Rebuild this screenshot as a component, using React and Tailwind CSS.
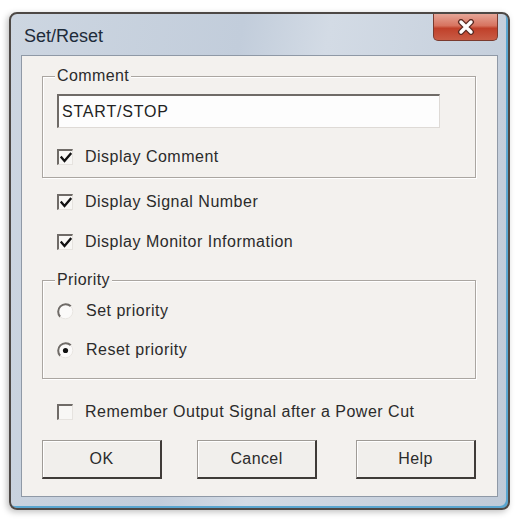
import React from "react";

const font = { fontFamily: '"Liberation Sans", Arial, sans-serif' };

function CheckBox({ checked }) {
  return (
    <span className="flex h-[16px] w-[16px] shrink-0 items-center justify-center border-t-2 border-l-2 border-b border-r border-t-[#6f6b67] border-l-[#6f6b67] border-b-[#e6e3df] border-r-[#e6e3df] bg-[#f8f7f5]">
      {checked ? (
        <svg width="12" height="12" viewBox="0 0 12 12">
          <path d="M1.5 5.5 L4.5 9 L10.5 2" fill="none" stroke="#111" strokeWidth="2.4" strokeLinecap="square" />
        </svg>
      ) : null}
    </span>
  );
}

function Radio({ checked }) {
  return (
    <svg width="17" height="17" viewBox="0 0 17 17" className="shrink-0">
      <circle cx="8.5" cy="8.5" r="7.5" fill="#fbfaf9" />
      <path d="M3.2 13.8 A7.5 7.5 0 0 1 13.8 3.2" fill="none" stroke="#6f6b67" strokeWidth="2" />
      <path d="M13.8 3.2 A7.5 7.5 0 0 1 3.2 13.8" fill="none" stroke="#e8e5e1" strokeWidth="1" />
      {checked ? <circle cx="8.5" cy="8.5" r="2.6" fill="#111" /> : null}
    </svg>
  );
}

function Row({ children, label, className = "" }) {
  return (
    <div className={`flex h-[24px] items-center ${className}`}>
      {children}
      <span className="ml-[12px] text-[16px] leading-none tracking-[0.5px] text-[#2b2b2b]">{label}</span>
    </div>
  );
}

function Group({ label, className = "", children }) {
  return (
    <div className={`relative border border-[#aaa6a1] shadow-[inset_1px_1px_0_#fff,1px_1px_0_#fff] ${className}`}>
      <span className="absolute -top-[10px] left-[12px] bg-[#f3f1ee] px-[2px] text-[16px] leading-[18px] tracking-[0.4px] text-[#2b2b2b]">
        {label}
      </span>
      {children}
    </div>
  );
}

function Button({ children, className = "" }) {
  return (
    <div
      className={`flex h-[39px] w-[120px] items-center justify-center border-t border-l border-b-2 border-r-2 border-t-[#9f9b96] border-l-[#9f9b96] border-b-[#3f3b38] border-r-[#3f3b38] bg-[#f1efec] text-[16px] tracking-[0.4px] text-[#2b2b2b] shadow-[inset_1px_1px_0_#fff] ${className}`}
    >
      {children}
    </div>
  );
}

export default function App() {
  return (
    <div className="h-[519px] w-[519px] bg-white pl-[9px] pt-[12px]" style={font}>
      <div className="flex h-[498px] w-[501px] flex-col overflow-hidden rounded-[8px] border-2 border-[#4d4845] bg-[linear-gradient(100deg,#cdd6e1_0%,#c2cddb_40%,#d3dbe5_55%,#bfcad8_100%)] shadow-[-2px_2px_6px_rgba(0,0,0,0.25),inset_-2px_-2px_0_#5aa6d0]">
        <div className="flex h-[41px] shrink-0 items-start justify-between">
          <span className="pl-[13px] pt-[13px] text-[18px] leading-[18px] text-[#1e2b3a]">Set/Reset</span>
          <div className="mr-[10px] flex h-[27px] w-[65px] items-center justify-center rounded-b-[5px] border border-t-0 border-[#7a3a2e] bg-[linear-gradient(#e5a597_0%,#d7735f_45%,#c0402a_55%,#c95c45_100%)]">
            <svg width="20" height="16" viewBox="0 0 20 16">
              <path d="M5 3 L15 13 M15 3 L5 13" stroke="#5b2a22" strokeWidth="6" strokeLinecap="round" />
              <path d="M5 3 L15 13 M15 3 L5 13" stroke="#fff" strokeWidth="3.4" strokeLinecap="round" />
            </svg>
          </div>
        </div>
        <div className="mx-[10px] flex h-[442px] shrink-0 flex-col border border-[#8f99a6] bg-[#f3f1ee] pl-[20px]">
          <Group label="Comment" className="mt-[20px] h-[102px] w-[434px]">
            <div className="ml-[14px] mt-[17px] flex h-[34px] w-[383px] items-center border-t-2 border-l-2 border-b border-r border-t-[#6f6b67] border-l-[#6f6b67] border-b-[#dedad6] border-r-[#dedad6] bg-[#fdfdfd] pl-[3px] text-[16px] tracking-[0.8px] text-[#222]">
              START/STOP
            </div>
            <Row label="Display Comment" className="ml-[14px] mt-[17px]">
              <CheckBox checked />
            </Row>
          </Group>
          <Row label="Display Signal Number" className="ml-[15px] mt-[12px]">
            <CheckBox checked />
          </Row>
          <Row label="Display Monitor Information" className="ml-[15px] mt-[16px]">
            <CheckBox checked />
          </Row>
          <Group label="Priority" className="mt-[26px] h-[99px] w-[434px]">
            <Row label="Set priority" className="ml-[14px] mt-[18px]">
              <Radio />
            </Row>
            <Row label="Reset priority" className="ml-[14px] mt-[15px]">
              <Radio checked />
            </Row>
          </Group>
          <Row label="Remember Output Signal after a Power Cut" className="ml-[15px] mt-[21px]">
            <CheckBox />
          </Row>
          <div className="mt-[16px] flex">
            <Button>OK</Button>
            <Button className="ml-[35px]">Cancel</Button>
            <Button className="ml-[39px]">Help</Button>
          </div>
        </div>
        <div className="flex-1" />
      </div>
    </div>
  );
}
